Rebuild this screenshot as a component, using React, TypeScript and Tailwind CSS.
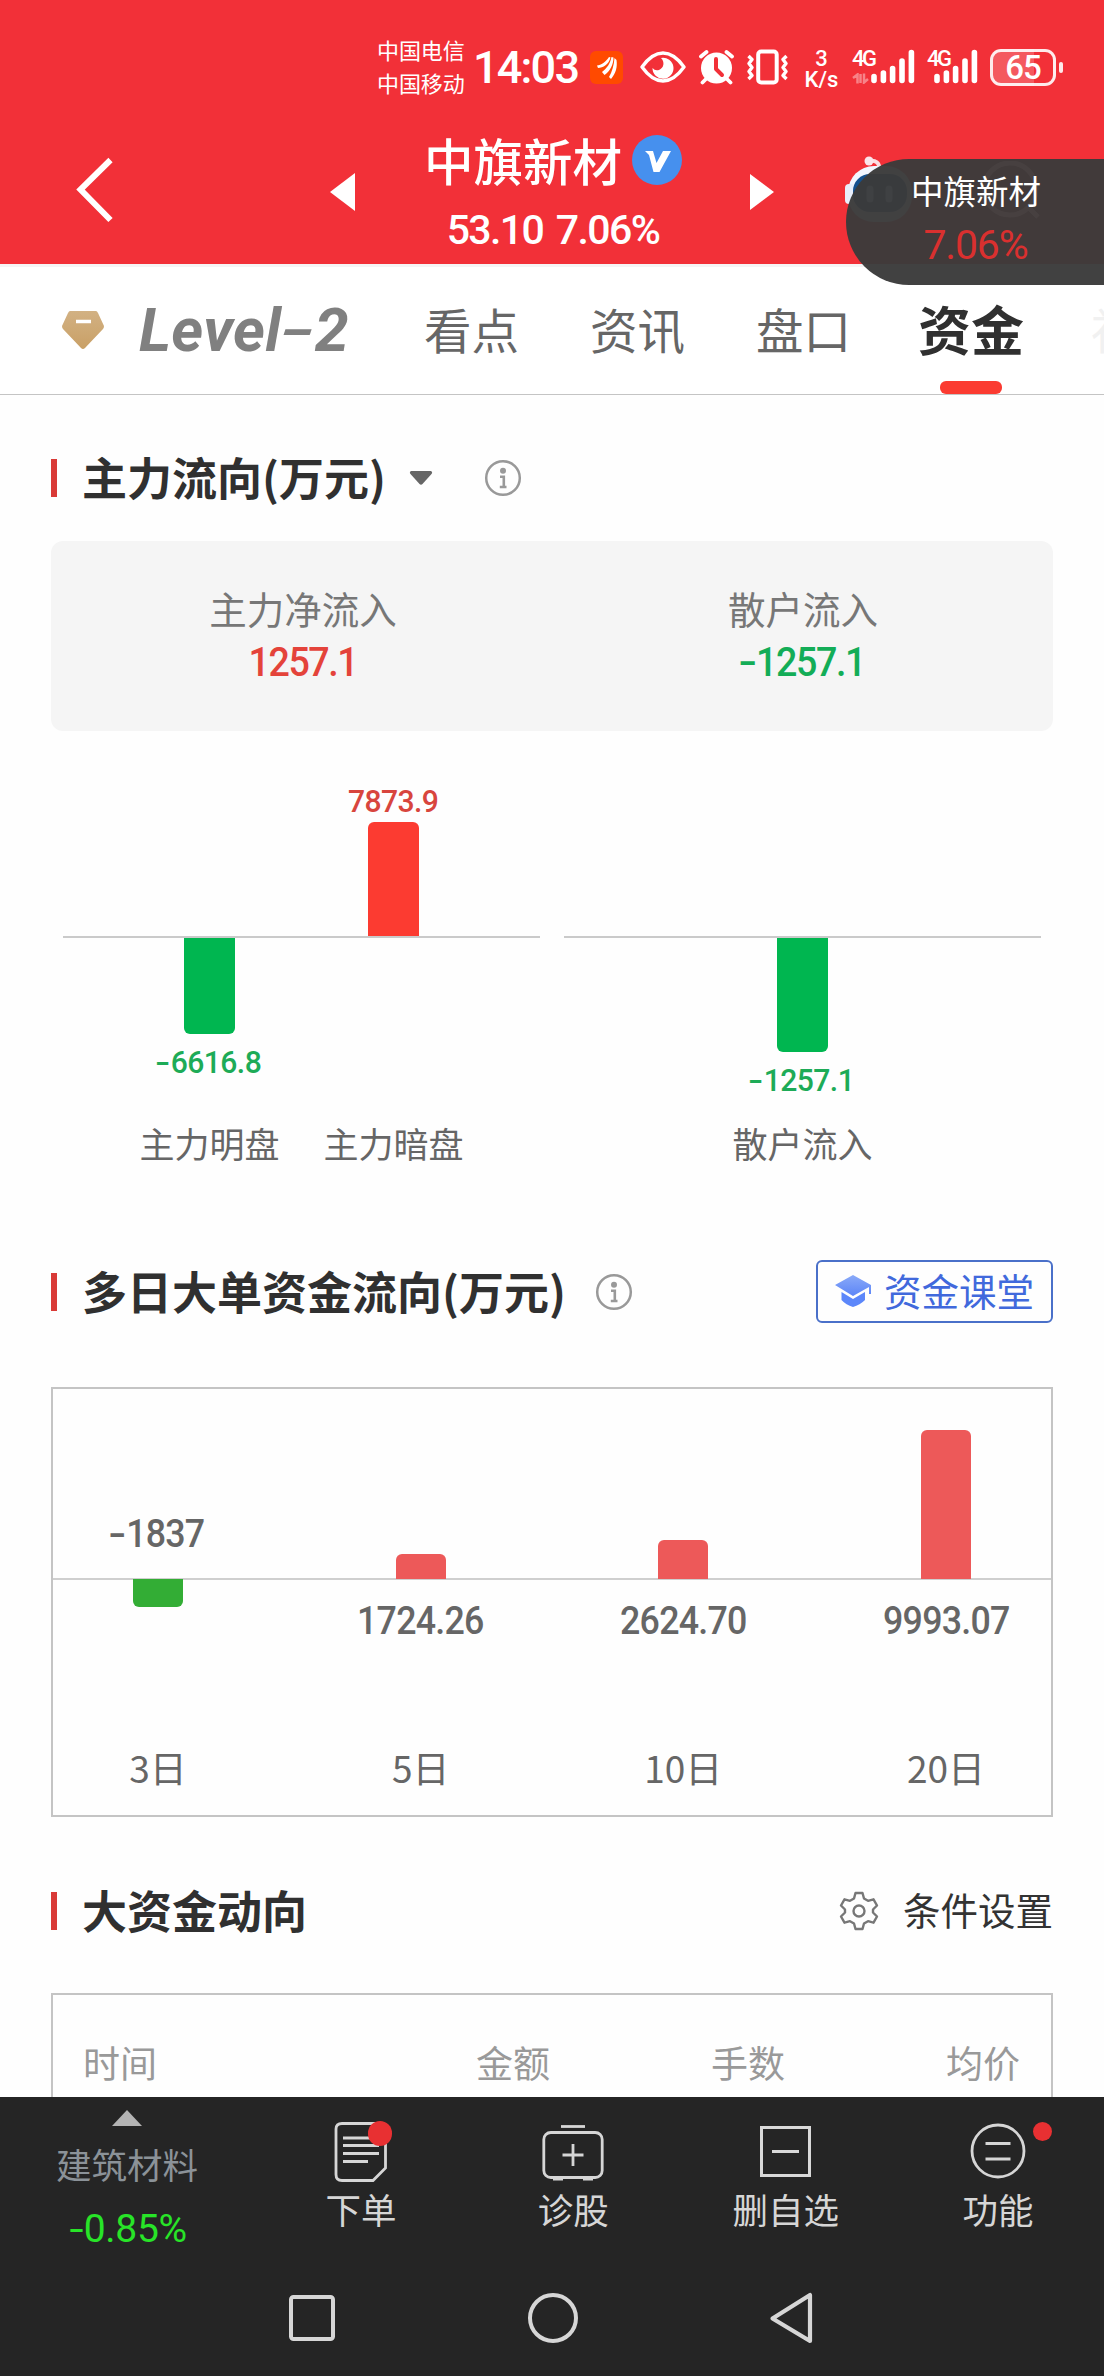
// App.tsx
import type { ReactNode } from "react";

/** One bar of the day chart; height is in px from the zero line */
type DayFlow = {
  label: string;
  value: string;
  up: number;
  down: number;
};

const DAY_FLOWS: DayFlow[] = [
  { label: "3日", value: "-1837", up: 0, down: 28 },
  { label: "5日", value: "1724.26", up: 25, down: 0 },
  { label: "10日", value: "2624.70", up: 39, down: 0 },
  { label: "20日", value: "9993.07", up: 149, down: 0 },
];

/** Condensed figure; the minus sign is drawn wider than the hyphen of the font */
function Figure({ value }: { value: string }) {
  const negative = value.startsWith("-");
  return (
    <span className="inline-block scale-x-[0.94] whitespace-nowrap">
      {negative && <span className="mr-[4px] inline-block scale-x-[1.45]">-</span>}
      {negative ? value.slice(1) : value}
    </span>
  );
}

function SignalBars() {
  return (
    <svg width="44" height="35" viewBox="0 0 44 35" stroke="#fff" strokeWidth="5.6" strokeLinecap="round">
      <path d="M3 27.5V31.5M12.4 24V31.5M21.6 19.5V31.5M31 12V31.5M40.4 3.5V31.5" />
    </svg>
  );
}

function StatusBar() {
  return (
    <div className="flex h-[134px] items-center pl-[377px] text-white">
      <div className="w-[90px] shrink-0 pb-[3px] text-[22px] leading-[33px] tracking-[-0.1px]">
        <div>中国电信</div>
        <div>中国移动</div>
      </div>
      <div className="ml-[6px] w-[108px] shrink-0 pt-[2px] whitespace-nowrap font-['Roboto'] text-[45px] leading-[50px] font-medium tracking-[-1.8px]">14:03</div>
      <svg className="ml-[9px] shrink-0" width="33" height="33" viewBox="0 0 33 33">
        <rect width="33" height="33" rx="6" fill="#ff4a00" />
        <path d="M7 14.500C11 14 16 11 19 6L20.500 6.500C19 13 13 17 8 17ZM12 21C17 17 20 13 21.500 6L23.500 6.500C23.500 14 20 20 14.500 24ZM19 26C22 21 24 14 24.500 7L26.500 9C27.500 16 26 22 21 28Z" fill="#fff" />
      </svg>
      <svg className="ml-[17px] shrink-0" width="46" height="34" viewBox="0 0 46 34" fill="none">
        <path d="M2 17Q12 3 23 3T44 17Q34 31 23 31T2 17Z" stroke="#fff" strokeWidth="3.400" strokeLinejoin="round" />
        <path d="M21 8A10.500 10.500 0 1 1 12.500 18A6 6 0 0 0 19 20C24 18 25 12 21 8Z" fill="#fff" />
      </svg>
      <svg className="ml-[12px] shrink-0" width="37" height="36" viewBox="0 0 37 36" fill="none">
        <circle cx="18.500" cy="19" r="15.500" fill="#fff" />
        <path d="M3 7.500L8.500 3M28.500 3L34 7.500M8 30L4.500 33.500M29 30L32.500 33.500" stroke="#fff" strokeWidth="3.800" strokeLinecap="round" />
        <path d="M18 10V20L24 26" stroke="#f23038" strokeWidth="4" strokeLinecap="round" strokeLinejoin="round" />
      </svg>
      <svg className="ml-[11px] shrink-0" width="43" height="36" viewBox="0 0 43 36" fill="none" stroke="#fff">
        <rect x="12.200" y="2.500" width="18.500" height="31" rx="3" strokeWidth="4" />
        <path d="M2.500 7L6 10.500L3 14.500L6 18.500L3 22.500L6 26.500L2.500 30M40.500 7L37 10.500L40 14.500L37 18.500L40 22.500L37 26.500L40.500 30" strokeWidth="3.400" strokeLinejoin="round" />
      </svg>
      <div className="ml-[15px] w-[35px] shrink-0 pt-[4px] text-center font-['Roboto'] text-[22px] leading-[21px] font-medium">
        <div>3</div>
        <div className="whitespace-nowrap">K/s</div>
      </div>
      <div className="ml-[13px] flex h-[36px] shrink-0">
        <div className="w-[19px]">
          <span className="block font-['Roboto'] text-[22px] leading-[19px] font-medium tracking-[-2.500px]">4G</span>
          <svg className="mt-[5px] opacity-40" width="17" height="11" viewBox="0 0 17 11" fill="none" stroke="#fff" strokeWidth="2.500">
            <path d="M1 5L5.500 1.500V10.500M8.500 1V10M12 .500V9.500L16 6" />
          </svg>
        </div>
        <SignalBars />
      </div>
      <div className="ml-[12px] flex h-[36px] shrink-0">
        <span className="block w-[7px] font-['Roboto'] text-[22px] leading-[19px] font-medium tracking-[-2.500px]">4G</span>
        <SignalBars />
      </div>
      <div className="ml-[12px] flex shrink-0 items-center gap-[3px]">
        <div className="flex h-[37px] w-[66px] items-center justify-center rounded-[11px] border-[3px] border-white/90 bg-linear-to-r from-white/20 from-68% to-transparent to-68% font-['Roboto'] text-[33px] leading-none font-medium tracking-[-1px]">65</div>
        <div className="h-[11px] w-[4px] rounded-full bg-white/90" />
      </div>
    </div>
  );
}

function TitleBar() {
  return (
    <div className="relative flex h-[130px] items-start text-white">
      <svg className="mt-[22px] ml-[74px] shrink-0" width="42" height="68" viewBox="0 0 42 68" fill="none">
        <path d="M36.500 4L6.500 33.500L36.500 64" stroke="#fff" strokeWidth="6" />
      </svg>
      <svg className="mt-[39px] ml-[214px] shrink-0" width="25" height="38" viewBox="0 0 25 38">
        <path d="M25 0V38L0 19Z" fill="#fff" />
      </svg>
      <div className="ml-[69px] w-[258px]">
        <div className="flex h-[52px] items-center justify-between">
          <span className="text-[49.500px] leading-[52px] font-medium whitespace-nowrap">中旗新材</span>
          <svg className="shrink-0" width="50" height="50" viewBox="0 0 50 50">
            <circle cx="25" cy="25" r="25" fill="#4690ee" />
            <path d="M13 16H21L24.500 28L31 16H39L27.500 37H21.500L17 20Z" fill="#fff" />
          </svg>
        </div>
        <div className="mt-[21px] text-center font-['Roboto'] text-[41px] leading-[46px] font-medium tracking-[-1.600px] whitespace-nowrap [word-spacing:4px]">53.10 7.06%</div>
      </div>
      <svg className="mt-[40px] ml-[68px] shrink-0" width="24" height="36" viewBox="0 0 24 36">
        <path d="M0 0V36L24 18Z" fill="#fff" />
      </svg>
      <svg className="mt-[20px] ml-[69px] shrink-0" width="74" height="72" viewBox="0 0 74 72" fill="none">
        <path d="M26 7Q36 5 37 16" stroke="#fbdde2" strokeWidth="4" />
        <circle cx="26" cy="7" r="4.500" fill="#fbe4ea" />
        <rect x="5" y="12" width="64" height="56" rx="26" fill="#f2f6ff" />
        <rect x="2" y="30" width="10" height="20" rx="4" fill="#e8eefb" />
        <rect x="10" y="20" width="54" height="38" rx="17" fill="#14508e" />
      </svg>
    </div>
  );
}

/** Floating quote pill stuck to the right edge of the screen */
function QuotePill() {
  return (
    <div className="absolute top-[159px] right-0 h-[126px] w-[258px] rounded-l-full bg-[#3b3b3b]/[0.97]">
      <svg className="absolute top-[2px] left-0 opacity-[0.03]" width="258" height="64" viewBox="0 0 258 64" fill="none" stroke="#fff" strokeWidth="5">
        <circle cx="164" cy="28" r="26" />
        <path d="M182 46L192 56" />
        <path d="M24 28V38M43 28V38" strokeWidth="7" strokeLinecap="round" />
      </svg>
      <div className="ml-[65px] w-[129px] pt-[11px] text-center">
        <div className="text-[32.500px] leading-[40px] whitespace-nowrap text-white">中旗新材</div>
        <div className="mt-[12px] font-['Roboto'] text-[41px] leading-[46px] tracking-[-1.200px] text-[#d9302f]">7.06%</div>
      </div>
    </div>
  );
}

function Tabs() {
  return (
    <div className="flex h-[131px] items-start overflow-hidden border-t-[3px] border-b border-t-[#f6f4f5] border-b-[#c4c4c4] text-[47.500px] leading-[56px] text-[#666]">
      <svg className="mt-[44px] ml-[61px] shrink-0" width="44" height="40" viewBox="0 0 44 40">
        <defs>
          <linearGradient id="gem" x1="0" y1="0" x2="0" y2="1">
            <stop offset="0" stopColor="#d2b183" />
            <stop offset="1" stopColor="#c9a066" />
          </linearGradient>
        </defs>
        <path d="M9 0H35Q36 0 37 2L43 15Q43 17 42 18L24 37Q22 39 20 37L2 18Q1 17 1 15L7 2Q8 0 9 0Z" fill="url(#gem)" />
        <path d="M15 10.500H30" stroke="#fff" strokeWidth="3.500" />
      </svg>
      <div className="mt-[31px] ml-[34px] w-[213px] shrink-0 whitespace-nowrap font-['Roboto'] text-[61px] leading-[64px] font-bold tracking-[0.300px] text-[#808080] italic">
        Level<span className="mx-[5px] inline-block scale-x-[1.600] scale-y-[0.850]">-</span>2
      </div>
      <div className="mt-[34px] ml-[72px] w-[95px] shrink-0">看点</div>
      <div className="mt-[34px] ml-[71px] w-[95px] shrink-0">资讯</div>
      <div className="mt-[34px] ml-[71px] w-[95px] shrink-0">盘口</div>
      <div className="ml-[67px] flex h-full w-[106px] shrink-0 flex-col items-center justify-between pt-[33px] text-[53px] font-bold text-[#303030]">
        <span>资金</span>
        <span className="h-[13px] w-[62px] rounded-md bg-[#fb3b31]" />
      </div>
      <div className="mt-[34px] ml-[67px] w-[95px] shrink-0 text-[#f1f1f1]">社区</div>
    </div>
  );
}

function InfoIcon() {
  return (
    <svg width="38" height="38" viewBox="0 0 38 38" fill="none" stroke="#999">
      <circle cx="19" cy="19" r="16.800" strokeWidth="2.500" />
      <circle cx="19" cy="11.800" r="3" fill="#999" stroke="none" />
      <path d="M16 17.800H19.800V28M15.800 28H22.500" strokeWidth="2.600" />
    </svg>
  );
}

function SectionTitle({ children, extra }: { children: ReactNode; extra?: ReactNode }) {
  return (
    <div className="flex h-[64px] items-center">
      <span className="h-[38px] w-[6px] bg-[#d93a37]" />
      <h2 className="ml-[25px] pb-[3px] text-[45px] leading-[61px] font-bold whitespace-nowrap text-[#303030]">{children}</h2>
      {extra}
    </div>
  );
}

function FlowSummary() {
  return (
    <div className="mt-[31px] grid h-[190px] grid-cols-2 rounded-xl bg-[#f5f5f5] pt-[43px] pl-[2px] text-center">
      <div>
        <div className="text-[37.500px] leading-[48px] text-[#777]">主力净流入</div>
        <div className="mt-[8px] font-['Roboto'] text-[40px] leading-[46px] font-medium tracking-[-1.500px] text-[#e4433a]">
          <Figure value="1257.1" />
        </div>
      </div>
      <div>
        <div className="text-[37.500px] leading-[48px] text-[#777]">散户流入</div>
        <div className="mt-[8px] font-['Roboto'] text-[40px] leading-[46px] font-medium tracking-[-1.500px] text-[#13ad57]">
          <Figure value="-1257.1" />
        </div>
      </div>
    </div>
  );
}

function FlowBar({ label, value, size }: { label: string; value: string; size: number }) {
  const negative = value.startsWith("-");
  return (
    <div className="flex w-[184px] flex-col items-center font-['Roboto'] text-[32px] leading-[38px] font-medium tracking-[-0.600px]">
      <div className="flex h-[155px] flex-col items-center justify-end text-[#d8453d]">
        {!negative && (
          <>
            <span className="mb-[2px]">
              <Figure value={value} />
            </span>
            <span className="w-[51px] rounded-t-md bg-[#fc3b31]" style={{ height: size }} />
          </>
        )}
      </div>
      <div className="mt-[2px] flex h-[182px] flex-col items-center text-[#1dab57]">
        {negative && (
          <>
            <span className="w-[51px] rounded-b-md bg-[#00b650]" style={{ height: size }} />
            <span className="mt-[9px]">
              <Figure value={value} />
            </span>
          </>
        )}
      </div>
      <div className="font-['Noto_Sans_CJK_SC'] text-[35px] leading-[46px] font-normal tracking-normal text-[#666]">{label}</div>
    </div>
  );
}

function FlowChart() {
  return (
    <div className="mt-[50px] flex justify-between px-[12px]">
      <div className="flex w-[477px] justify-center bg-[linear-gradient(#cacaca,#cacaca)] bg-[length:100%_2px] bg-[position:0_155px] bg-no-repeat">
        <FlowBar label="主力明盘" value="-6616.8" size={96} />
        <FlowBar label="主力暗盘" value="7873.9" size={114} />
      </div>
      <div className="flex w-[477px] justify-center bg-[linear-gradient(#cacaca,#cacaca)] bg-[length:100%_2px] bg-[position:0_155px] bg-no-repeat">
        <FlowBar label="散户流入" value="-1257.1" size={114} />
      </div>
    </div>
  );
}

function DayChart() {
  return (
    <div className="mt-[63px] h-[430px] border-2 border-[#c4c4c4]">
      <div className="flex justify-between bg-[linear-gradient(#cfcfcf,#cfcfcf)] bg-[length:100%_2px] bg-[position:0_189px] bg-no-repeat px-[35px]">
        {DAY_FLOWS.map((d) => (
          <div key={d.label} className="flex w-[140px] flex-col items-center font-['Roboto'] text-[38px] leading-[44px] font-medium tracking-[-0.800px] text-[#666]">
            <div className="flex h-[190px] flex-col items-center justify-end">
              {d.down > 0 && (
                <span className="mb-[23px]">
                  <Figure value={d.value} />
                </span>
              )}
              {d.up > 0 && <span className="w-[50px] rounded-t-md bg-[#ed5959]" style={{ height: d.up }} />}
            </div>
            <div className="h-[164px]">
              {d.down > 0 ? (
                <span className="block w-[50px] rounded-b-md bg-[#33ad35]" style={{ height: d.down }} />
              ) : (
                <span className="block pt-[20px]">
                  <Figure value={d.value} />
                </span>
              )}
            </div>
            <div className="font-['Noto_Sans_CJK_SC'] text-[37px] leading-[48px] font-normal tracking-normal">{d.label}</div>
          </div>
        ))}
      </div>
    </div>
  );
}

function GearIcon() {
  return (
    <svg width="40" height="40" viewBox="0 0 40 40" fill="none" stroke="#777" strokeWidth="2.400" strokeLinejoin="round">
      <path d="M16.500 2H23.500L25 7.500L29 9.800L34.500 8.300L38 14.500L34 18.500V21.500L38 25.500L34.500 31.700L29 30.200L25 32.500L23.500 38H16.500L15 32.500L11 30.200L5.500 31.700L2 25.500L6 21.500V18.500L2 14.500L5.500 8.300L11 9.800L15 7.500Z" />
      <circle cx="20" cy="20" r="5.500" />
    </svg>
  );
}

function BottomItem({ label, children }: { label: string; children: ReactNode }) {
  return (
    <div className="flex w-[140px] flex-col items-center">
      <div className="relative mt-[21px] h-[67px]">{children}</div>
      <div className="text-[35.500px] leading-[48px] whitespace-nowrap">{label}</div>
    </div>
  );
}

function BottomBar() {
  return (
    <div className="h-[279px] shrink-0 bg-[#252525] text-[#d6d6d6]">
      <div className="flex h-[168px]">
        <div className="ml-[37px] flex w-[180px] flex-col items-center">
          <svg className="mt-[13px]" width="30" height="16" viewBox="0 0 30 16">
            <path d="M15 0L30 16H0Z" fill="#b4b4b4" />
          </svg>
          <div className="mt-[14px] text-[35.500px] leading-[48px] text-[#8b9298]">建筑材料</div>
          <div className="mt-[18px] pl-[4px] font-['Roboto'] text-[39px] leading-[46px] tracking-[-0.300px] text-[#28e428]">
            <span className="mr-[2px] inline-block scale-x-[1.300]">-</span>0.85%
          </div>
        </div>
        <div className="ml-[74px] flex w-[777px] justify-between">
          <BottomItem label="下单">
            <svg className="mt-[3px]" width="54" height="62" viewBox="0 0 54 62" fill="none" stroke="#d6d6d6" strokeWidth="2.800">
              <path d="M8 2.500H46Q51.500 2.500 51.500 8V47L39 59.500H8Q2 59.500 2 53.500V8Q2 2.500 8 2.500Z" />
              <path d="M9 17H42M9 24.500H45M9 32.500H45M9 40.500H34" />
            </svg>
            <span className="absolute top-[3px] right-[-4px] h-[25px] w-[24px] rounded-full bg-[#e83032]" />
          </BottomItem>
          <BottomItem label="诊股">
            <svg className="mt-[6px]" width="62" height="57" viewBox="0 0 62 57" fill="none" stroke="#d6d6d6" strokeWidth="2.800">
              <path d="M19 2.500H43" />
              <rect x="1.800" y="8.500" width="58.400" height="45" rx="7" />
              <path d="M31 20V42M20.500 31H41.500M11 55H21M41 55H51" />
            </svg>
          </BottomItem>
          <BottomItem label="删自选">
            <svg className="mt-[8px]" width="51" height="51" viewBox="0 0 51 51" fill="none" stroke="#d9d9d9" strokeWidth="3">
              <rect x="1.500" y="1.500" width="48" height="48" />
              <path d="M12 25.500H39" />
            </svg>
          </BottomItem>
          <BottomItem label="功能">
            <svg className="mt-[5px]" width="56" height="56" viewBox="0 0 56 56" fill="none" stroke="#d6d6d6" strokeWidth="2.800">
              <circle cx="28" cy="28" r="26" />
              <path d="M15.500 20.500H40.500M15.500 36H40.500" />
            </svg>
            <span className="absolute top-[4px] right-[-26px] h-[19px] w-[19px] rounded-full bg-[#e83032]" />
          </BottomItem>
        </div>
      </div>
      {/* System navigation keys */}
      <div className="mt-[26px] flex items-center justify-between pr-[289px] pl-[288px]">
        <svg width="48" height="54" viewBox="0 0 48 54" fill="none" stroke="#d6d6d6" strokeWidth="4">
          <rect x="3" y="6" width="42" height="42" rx="2.500" />
        </svg>
        <svg width="54" height="54" viewBox="0 0 54 54" fill="none" stroke="#d6d6d6" strokeWidth="4">
          <circle cx="27" cy="27" r="23" />
        </svg>
        <svg width="46" height="54" viewBox="0 0 46 54" fill="none" stroke="#d6d6d6" strokeWidth="4.200" strokeLinejoin="round">
          <path d="M41 4V50L3.500 27.500Z" />
        </svg>
      </div>
    </div>
  );
}

export default function App() {
  return (
    <main className="relative flex h-[2376px] w-[1104px] flex-col overflow-hidden bg-[#fefefe] font-['Noto_Sans_CJK_SC',sans-serif]">
      <header className="shrink-0 bg-[#f23038]">
        <StatusBar />
        <TitleBar />
      </header>
      <nav className="shrink-0 bg-white">
        <Tabs />
      </nav>
      <QuotePill />

      <div className="min-h-0 flex-1 overflow-hidden pr-[51px] pl-[51px]">
        <section className="pt-[51px]">
          <SectionTitle
            extra={
              <>
                <svg className="ml-[23px]" width="24" height="14" viewBox="0 0 24 14">
                  <path d="M2 0H22Q24 1 22.500 3L13.500 13Q12 14.500 10.500 13L1.500 3Q0 1 2 0Z" fill="#666" />
                </svg>
                <span className="ml-[51px]">
                  <InfoIcon />
                </span>
              </>
            }
          >
            主力流向(万元)
          </SectionTitle>
          <FlowSummary />
          <FlowChart />
        </section>

        <section className="mt-[94px]">
          <SectionTitle
            extra={
              <>
                <span className="ml-[29px]">
                  <InfoIcon />
                </span>
                <button type="button" className="mb-[2px] ml-auto flex h-[63px] w-[237px] items-center rounded-md border-2 border-[#4a70c9] pl-[17px] text-[37.500px] leading-none whitespace-nowrap text-[#4169dc]">
                  <svg width="37" height="34" viewBox="0 0 37 34">
                    <defs>
                      <linearGradient id="cap" x1="0" y1="0" x2="0" y2="1">
                        <stop offset="0" stopColor="#8aaaf8" />
                        <stop offset="1" stopColor="#5c85f7" />
                      </linearGradient>
                    </defs>
                    <path d="M18 1L36 11V20H34V13L18 22L0 11Z" fill="url(#cap)" />
                    <path d="M6.500 18L18 25L30 18V26Q25 31 18 33Q11 31 6.500 26Z" fill="#5c87fa" />
                  </svg>
                  <span className="ml-[12px] pb-[2px]">资金课堂</span>
                </button>
              </>
            }
          >
            多日大单资金流向(万元)
          </SectionTitle>
          <DayChart />
        </section>

        <section className="mt-[62px]">
          <SectionTitle
            extra={
              <div className="ml-auto flex items-center gap-[24px] text-[37.500px] text-[#333]">
                <GearIcon />
                <span className="pb-[3px]">条件设置</span>
              </div>
            }
          >
            大资金动向
          </SectionTitle>
          <div className="mt-[50px] flex h-[300px] border-2 border-[#c4c4c4] pt-[43px] pr-[30px] pl-[30px] text-[37px] leading-[48px] text-[#999]">
            <span className="w-[232px]">时间</span>
            <span className="w-[235px] text-right">金额</span>
            <span className="w-[235px] text-right">手数</span>
            <span className="w-[235px] text-right">均价</span>
          </div>
        </section>
      </div>

      <BottomBar />
    </main>
  );
}
